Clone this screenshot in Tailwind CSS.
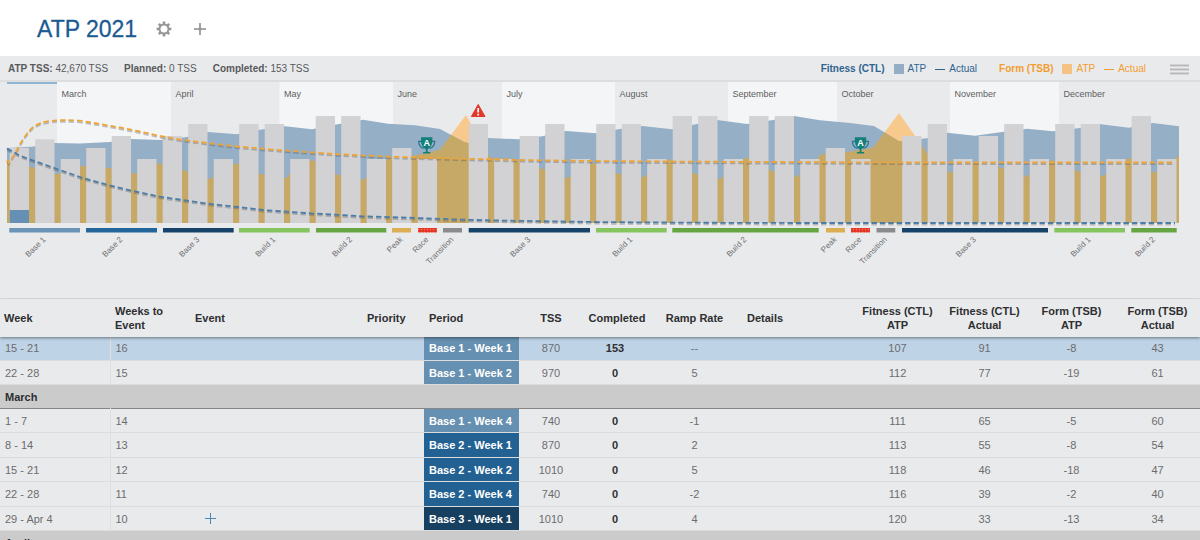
<!DOCTYPE html>
<html lang="en">
<head>
<meta charset="utf-8">
<meta name="viewport" content="width=device-width, initial-scale=1">
<title>ATP 2021</title>
<script src="https://cdn.jsdelivr.net/npm/@tailwindcss/browser@4"></script>
</head>
<body class="bg-[#e9eaec] font-['Liberation_Sans',Arial,sans-serif] text-[#6b6c6e]">

<header class="flex h-14 items-center bg-white pl-[37px] pt-[2px]">
  <h1 class="text-[23px] leading-7 text-[#1c5a92] [-webkit-text-stroke:0.3px_#1c5a92]">ATP 2021</h1>
  <button type="button" aria-label="Plan settings" class="ml-[19px] text-[#969696]">
    <svg class="block size-4" viewBox="0 0 16 16" fill="none" stroke="currentColor">
      <circle cx="8" cy="8" r="4.5" stroke-width="2"/>
      <g stroke-width="2.6">
        <path d="M8 3.2V.6M8 12.8v2.6M3.2 8H.6M12.8 8h2.6M4.6 4.6 2.8 2.8M11.4 4.6l1.8-1.8M4.6 11.4l-1.8 1.8M11.4 11.4l1.8 1.8"/>
      </g>
    </svg>
  </button>
  <button type="button" aria-label="Add plan" class="ml-[22px] text-[#8c8c8c]">
    <svg class="block size-3" viewBox="0 0 12 12" fill="none" stroke="currentColor" stroke-width="1.6"><path d="M6 0v12M0 6h12"/></svg>
  </button>
</header>

<main>
  <section aria-label="Plan totals" class="flex h-[26px] items-center justify-between border-b-2 border-[#dcdddf] pl-2 pr-[11px] pt-[2px] text-[10px] leading-4 text-[#58595b]">
    <div class="flex gap-4">
      <p><strong>ATP TSS:</strong> 42,670 TSS</p>
      <p><strong>Planned:</strong> 0 TSS</p>
      <p><strong>Completed:</strong> 153 TSS</p>
    </div>
    <div class="flex items-center">
      <div class="flex items-center text-[#2f6490]">
        <strong>Fitness (CTL)</strong>
        <span class="ml-[9px] size-[10px] bg-[#92adc4]"></span><span class="ml-1">ATP</span>
        <span class="ml-[9px] h-px w-[10px] bg-[#2f6490]"></span><span class="ml-1">Actual</span>
      </div>
      <div class="ml-[22px] flex items-center text-[#f49d2f]">
        <strong>Form (TSB)</strong>
        <span class="ml-[9px] size-[10px] bg-[#f6c284]"></span><span class="ml-1">ATP</span>
        <span class="ml-[9px] h-px w-[10px] bg-[#f49d2f]"></span><span class="ml-1">Actual</span>
      </div>
      <button type="button" aria-label="Chart menu" class="ml-6">
        <svg class="block h-3 w-[19px]" viewBox="0 0 19 12">
          <path d="M0 2.7h19M0 6.7h19M0 10.7h19" stroke="#cfcfd0" stroke-width="2"/>
          <path d="M0 2.2h19M0 6.2h19M0 10.2h19" stroke="#adadaf"/>
        </svg>
      </button>
    </div>
  </section>

  <svg id="chart" class="block h-auto w-full" viewBox="0 82 1200 216" role="img" aria-label="Annual training plan by week">
    <defs>
      <path id="fitness" d="M7 223V148L32 146.7 54 143 80 143.5 110 142 131 139 160 140 187 137 208 132 237 134.3 258 130 285 126.3 312 129.3 335 124.7 363 119.7 388 123.7 415 125.3 440 129 464 142 469 143.3 488 138 519 139.3 542 136.3 566 131 596 133.3 620 129 642 126 672 129.3 697 124 717 120 747 124 773 120 794 116 820 120.3 850 123 874 126 899 141.3 903 141.5 928 138 947 132.7 975 135.7 1002 132 1027 128.7 1053 131.3 1080 128 1101 124.3 1129 127.7 1153 123 1179 126.3V223z"/>
      <path id="form" d="M7 223V160L31 167 57 174.3 83 165.7 109 168 134 173.7 159 163.3 185 170.7 210 179 237 163 260 174 287 178 290 173 312 159.7 338 175 363 180 389 157.7 415 155.5 440 149.7 466 115 488 155 491 158 516 159 542 168.7 567 178.3 593 162.7 618 173.7 643 177.3 669 159 695 174 720 179.3 746 157.3 771 170.7 797 177 822 154 848 152 873 147.7 899 113 927 153 950 173 975 162 1001 167.7 1026 176.7 1052 160 1078 171.3 1103 176 1129 157.7 1154 172.7 1179 156V223z"/>
      <clipPath id="under"><use href="#fitness"/></clipPath>
      <pattern id="dots" width="3" height="3" patternUnits="userSpaceOnUse"><rect width="3" height="3" fill="#e5322b"/><circle cx="1.5" cy="1.5" r=".7" fill="#f58a3c"/></pattern>
      <path id="formLine" d="M7 160L9 163 17 150Q23 138 30 130T52 120.8Q62 119.6 80 120.7L100 124 120 127.5 140 131.5 160 136 180 139.5 207 143 237 146.5 270 149.3 310 152.3 340 154.3 390 156.7 463 158.7 520 160 593 161 700 161.7 900 162.5H1175"/>
      <path id="fitLine" d="M7 148.5L20 155.7 37 162 60 170 83 178 107 184.7 133 191 160 196.7 187 200.7 213 204.3 238 207 263 210 310 213.3 363 216.3 417 218 463 219.7 510 220.7 593 222 693 222.7 800 223H1175"/>
      <g id="trophy">
        <path d="M-5 4h-3Q-8 10-3 11M5 4h3Q8 10 3 11" fill="none" stroke="#2b7390" stroke-width="1.3"/>
        <path d="M-5.7 0H5.7Q6.4 9.5 .9 12v2.6H3.6V16.2H-3.6V14.6H-.9V12Q-6.4 9.5-5.7 0z" fill="#128078"/>
        <text y="8.3" text-anchor="middle" font-size="9" font-weight="bold" fill="#fff">A</text>
      </g>
    </defs>
    <g id="months" font-size="9" fill="#5d5e60"></g>
    <rect x="7" y="82" width="50" height="2" fill="#92b4d1"/>
    <use href="#form" fill="#f8c98c"/>
    <use href="#fitness" fill="#94afc6"/>
    <use href="#form" fill="#c7a967" clip-path="url(#under)"/>
    <path id="bars" fill="#d2d2d4"/>
    <rect x="9.7" y="210" width="19.3" height="13" fill="#6690b3"/>
    <g fill="none" stroke-width="1.8" stroke-dasharray="5.4 3">
      <use href="#fitLine" y="1.5" stroke="#555" stroke-opacity=".35" stroke-width="2"/>
      <use href="#fitLine" stroke="#4c7da6"/>
      <use href="#formLine" y="1.5" stroke="#555" stroke-opacity=".35" stroke-width="2"/>
      <use href="#formLine" stroke="#eda53a"/>
    </g>
    <use href="#trophy" x="426.7" y="137.3"/>
    <use href="#trophy" x="860.5" y="137.3"/>
    <path d="M478.2 104.5L485 116.5H471.4z" fill="#e2382b" stroke="#e2382b" stroke-linejoin="round"/>
    <path d="M478.2 108v4.5M478.2 113.8v1.6" stroke="#fff" stroke-width="1.7"/>
    <g id="periods" font-size="8" fill="#6f7072"></g>
  </svg>

  <table class="w-full table-fixed border-collapse text-center text-[11px] leading-[14px]">
    <colgroup>
      <col class="w-[110px]"><col class="w-[80px]"><col class="w-[172px]"><col class="w-[62px]"><col class="w-[95px]"><col class="w-[64px]"><col class="w-[68px]"><col class="w-[87px]"><col class="w-[116px]"><col class="w-[87px]"><col class="w-[87px]"><col class="w-[87px]"><col class="w-[85px]">
    </colgroup>
    <thead class="text-[#2e2f31]">
      <tr class="relative z-10 h-[38px] border-t border-[#dcdcdc] shadow-[0_1px_3px_rgba(0,0,0,0.45)] [clip-path:inset(0_0_-6px_0)] [&>th]:p-0">
        <th scope="col"><div class="pl-1 text-left">Week</div></th>
        <th scope="col"><div class="pl-[5px] text-left">Weeks to<br>Event</div></th>
        <th scope="col"><div class="pl-[5px] text-left">Event</div></th>
        <th scope="col"><div class="pl-[5px] text-left">Priority</div></th>
        <th scope="col"><div class="pl-[5px] text-left">Period</div></th>
        <th scope="col">TSS</th>
        <th scope="col">Completed</th>
        <th scope="col">Ramp Rate</th>
        <th scope="col"><div class="pl-[9px] text-left">Details</div></th>
        <th scope="col">Fitness (CTL)<br>ATP</th>
        <th scope="col">Fitness (CTL)<br>Actual</th>
        <th scope="col">Form (TSB)<br>ATP</th>
        <th scope="col">Form (TSB)<br>Actual</th>
      </tr>
    </thead>
    <tbody class="[&>tr]:h-6 [&>tr]:border-b [&>tr]:border-[#dcdcdd] [&_td]:p-0 [&_td:nth-child(-n+2)]:pl-[5px] [&_td:nth-child(-n+2)]:text-left [&_td:nth-child(2)]:border-l [&_td:nth-child(2)]:border-[#dfdfe0] [&_td:nth-child(5)]:pl-[5px] [&_td:nth-child(5)]:text-left [&_td:nth-child(5)]:font-bold [&_td:nth-child(5)]:text-white [&_td:nth-child(7)]:pr-1 [&_td:nth-child(7)]:font-bold [&_td:nth-child(7)]:text-[#2e2f31]">
      <tr class="bg-[#bfd3e6]"><td>15 - 21</td><td>16</td><td></td><td></td><td class="bg-[#6690b1]">Base 1 - Week 1</td><td>870</td><td>153</td><td>--</td><td></td><td>107</td><td>91</td><td>-8</td><td>43</td></tr>
      <tr><td>22 - 28</td><td>15</td><td></td><td></td><td class="bg-[#6690b1]">Base 1 - Week 2</td><td>970</td><td>0</td><td>5</td><td></td><td>112</td><td>77</td><td>-19</td><td>61</td></tr>
    </tbody>
    <tbody>
      <tr class="h-6 border-b border-[#858585] bg-[#cbcbcb] text-[#2e2f31]"><th scope="rowgroup" colspan="13" class="p-0 pl-[5px] text-left">March</th></tr>
    </tbody>
    <tbody class="[&>tr]:h-6 [&>tr:nth-child(even)]:h-[25px] [&>tr]:border-b [&>tr]:border-[#dcdcdd] [&_td]:p-0 [&_td:nth-child(-n+2)]:pl-[5px] [&_td:nth-child(-n+2)]:text-left [&_td:nth-child(2)]:border-l [&_td:nth-child(2)]:border-[#dfdfe0] [&_td:nth-child(5)]:pl-[5px] [&_td:nth-child(5)]:text-left [&_td:nth-child(5)]:font-bold [&_td:nth-child(5)]:text-white [&_td:nth-child(7)]:pr-1 [&_td:nth-child(7)]:font-bold [&_td:nth-child(7)]:text-[#2e2f31]">
      <tr><td>1 - 7</td><td>14</td><td></td><td></td><td class="bg-[#6690b1]">Base 1 - Week 4</td><td>740</td><td>0</td><td>-1</td><td></td><td>111</td><td>65</td><td>-5</td><td>60</td></tr>
      <tr><td>8 - 14</td><td>13</td><td></td><td></td><td class="bg-[#236192]">Base 2 - Week 1</td><td>870</td><td>0</td><td>2</td><td></td><td>113</td><td>55</td><td>-8</td><td>54</td></tr>
      <tr><td>15 - 21</td><td>12</td><td></td><td></td><td class="bg-[#236192]">Base 2 - Week 2</td><td>1010</td><td>0</td><td>5</td><td></td><td>118</td><td>46</td><td>-18</td><td>47</td></tr>
      <tr><td>22 - 28</td><td>11</td><td></td><td></td><td class="bg-[#236192]">Base 2 - Week 4</td><td>740</td><td>0</td><td>-2</td><td></td><td>116</td><td>39</td><td>-2</td><td>40</td></tr>
      <tr><td>29 - Apr 4</td><td>10</td><td><button type="button" aria-label="Add event" class="ml-[15px] block text-[#4a86b8]"><svg class="block size-[11px]" viewBox="0 0 11 11" fill="none" stroke="currentColor"><path d="M5.5 0v11M0 5.5h11"/></svg></button></td><td></td><td class="bg-[#173f60]">Base 3 - Week 1</td><td>1010</td><td>0</td><td>4</td><td></td><td>120</td><td>33</td><td>-13</td><td>34</td></tr>
    </tbody>
    <tbody>
      <tr class="h-6 border-b border-[#858585] bg-[#cbcbcb] text-[#2e2f31]"><th scope="rowgroup" colspan="13" class="p-0 pl-[5px] text-left">April</th></tr>
    </tbody>
  </table>
</main>

<script>
  const NS = 'http://www.w3.org/2000/svg';
  const add = (parent, tag, attrs, text) => {
    const el = document.createElementNS(NS, tag);
    for (const k in attrs) el.setAttribute(k, attrs[k]);
    if (text) el.textContent = text;
    parent.appendChild(el);
  };

  // Month bands: name, start x, end x; every other band is lighter
  const monthLayer = document.getElementById('months');
  [['March', 57, 171], ['April', 171, 279.5], ['May', 279.5, 393], ['June', 393, 502], ['July', 502, 615],
   ['August', 615, 728], ['September', 728, 837], ['October', 837, 950], ['November', 950, 1059], ['December', 1059, 1179]
  ].forEach(([name, a, b], i) => {
    if (i % 2 === 0) add(monthLayer, 'rect', { x: a, y: 82, width: b - a, height: 141, fill: '#f4f5f7' });
    add(monthLayer, 'text', { x: a + 4.5, y: 96.5 }, name);
  });

  // Weekly planned load, 46 weeks; 0 leaves the week without a bar
  const barTop = { 740: 159, 870: 148, 970: 139.3, 1010: 136, 1130: 124, 1200: 116 };
  const weeks = [870, 970, 740, 870, 1010, 740, 1010, 1130, 740, 1130, 1130, 740, 1200, 1200, 740, 870, 740, 0,
    1130, 740, 1010, 1130, 740, 1130, 1130, 740, 1200, 1200, 740, 1200, 1200, 740, 870, 740, 0,
    1010, 1130, 740, 1010, 1130, 740, 1130, 1130, 740, 1200, 740];
  document.getElementById('bars').setAttribute('d', weeks.map((w, i) =>
    w ? `M${9.7 + 25.5 * i} 223V${barTop[w]}h19.3V223z` : '').join(''));

  // Training periods: name, start x, end x, fill
  const periodLayer = document.getElementById('periods');
  [['Base 1', 9.3, 80, '#6a93b5'], ['Base 2', 86, 157, '#24659a'], ['Base 3', 163, 233.7, '#17436a'],
   ['Build 1', 239, 309.7, '#86c460'], ['Build 2', 316, 386.3, '#66a542'], ['Peak', 392, 411, '#dcae54'],
   ['Race', 418, 437, 'url(#dots)'], ['Transition', 443, 462, '#8b8b8d'], ['Base 3', 468.7, 590, '#17436a'],
   ['Build 1', 596, 666.7, '#86c460'], ['Build 2', 672.3, 818.7, '#66a542'], ['Peak', 826, 845, '#dcae54'],
   ['Race', 851, 870, 'url(#dots)'], ['Transition', 876.5, 895.3, '#8b8b8d'], ['Base 3', 902, 1048, '#17436a'],
   ['Build 1', 1054.3, 1125, '#86c460'], ['Build 2', 1131.3, 1176.7, '#66a542']
  ].forEach(([name, a, b, fill]) => {
    add(periodLayer, 'rect', { x: a, y: 228, width: b - a, height: 4.5, fill });
    add(periodLayer, 'text', { 'text-anchor': 'end', transform: `translate(${(a + b) / 2 + 1.5} 240) rotate(-45)` }, name);
  });
</script>
</body>
</html>
